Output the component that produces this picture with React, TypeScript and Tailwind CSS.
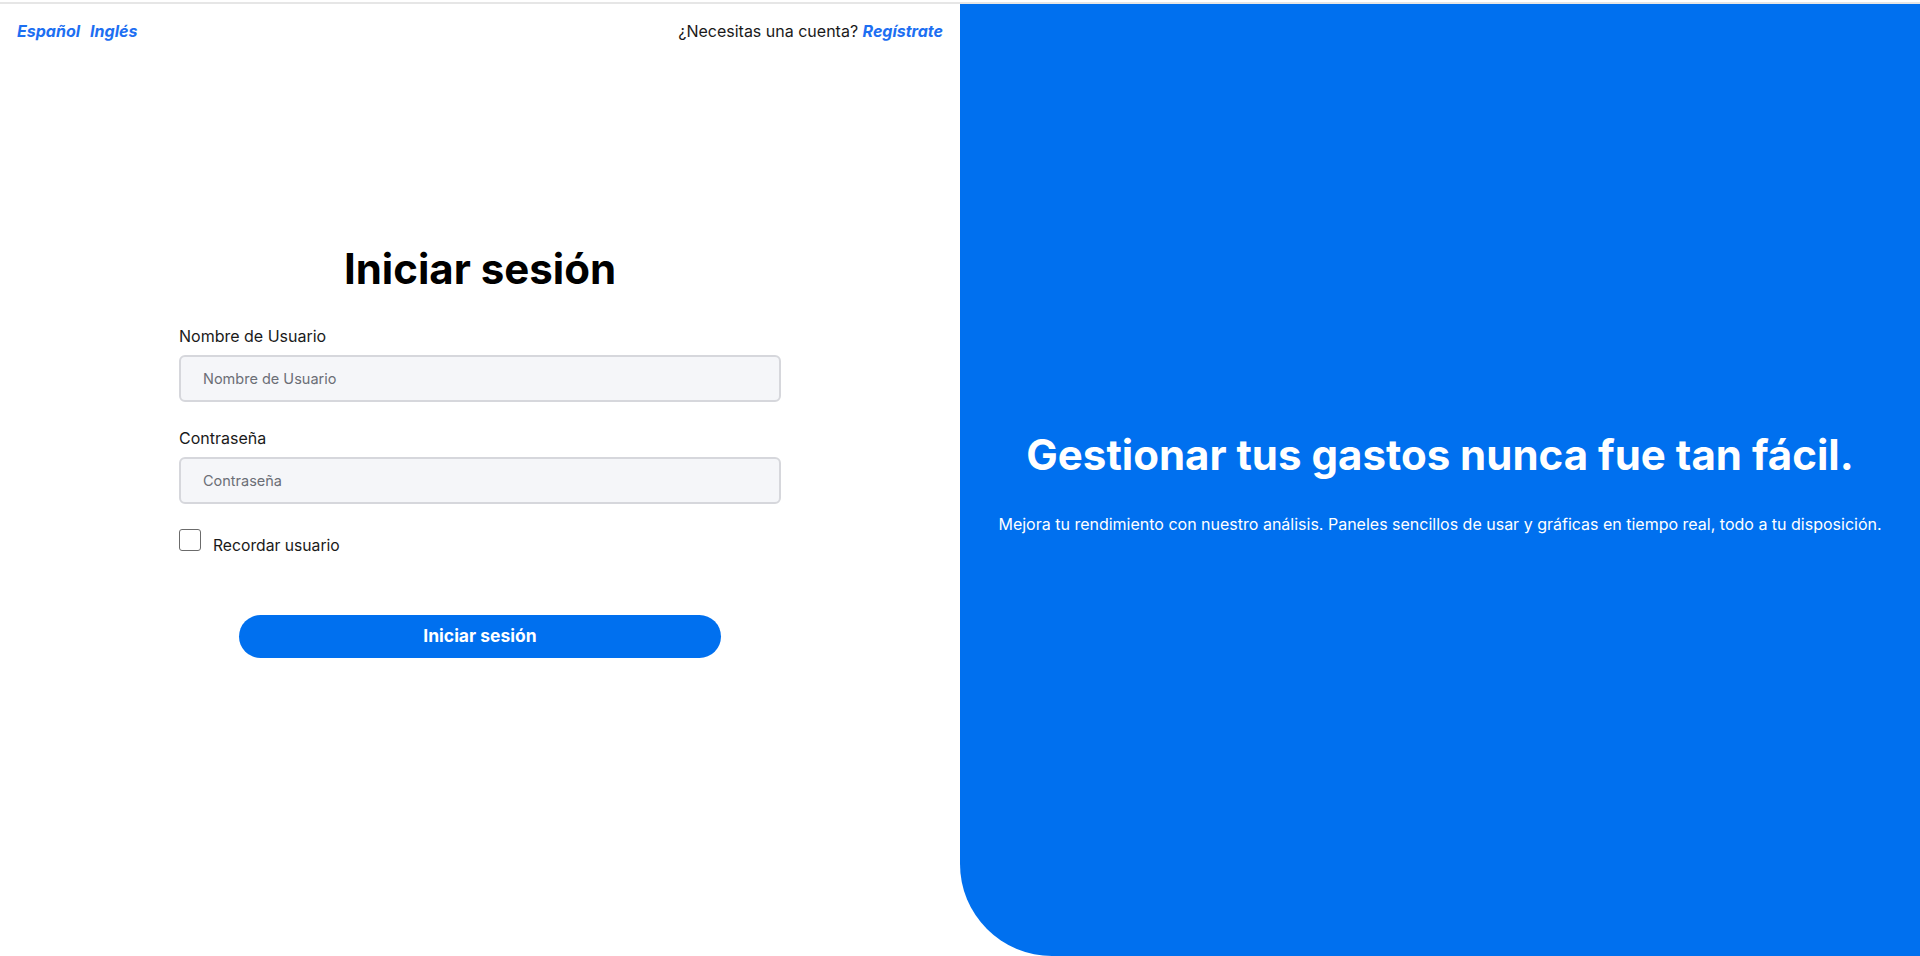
import React from "react";

export default function App() {
  return (
    <div className="w-full h-[956px] bg-white flex flex-col overflow-hidden" style={{ fontFamily: "Inter, 'Noto Sans', sans-serif" }}>
      <div className="h-[4px] bg-white border-b-2 border-[#e6e6e6]" />
      <div className="flex flex-1">
        <div className="w-[960px] flex flex-col">
          <div className="flex justify-between items-center px-[17px] pt-[15px] text-base leading-6">
            <div className="flex gap-[10px] font-bold italic text-[#1d6ff2]">
              <a href="#">Español</a>
              <a href="#">Inglés</a>
            </div>
            <div className="text-[#1a1a1a]">
              ¿Necesitas una cuenta?{" "}
              <a href="#" className="font-bold italic text-[#1d6ff2]">Regístrate</a>
            </div>
          </div>
          <form className="mx-auto w-[602px] mt-[201px] flex flex-col">
            <h1 className="text-center text-[42px] leading-[50px] font-bold text-black">Iniciar sesión</h1>
            <label className="mt-[30px] text-[16px] leading-[24px] text-[#1a1a1a]">Nombre de Usuario</label>
            <input
              type="text"
              placeholder="Nombre de Usuario"
              className="mt-[7px] h-[47px] w-full rounded-[6px] border-2 border-[#d6d7dc] bg-[#f5f6f9] pl-[22px] text-[14.5px] placeholder:text-[#6b6e76] outline-none"
            />
            <label className="mt-[24px] text-[16px] leading-[24px] text-[#1a1a1a]">Contraseña</label>
            <input
              type="password"
              placeholder="Contraseña"
              className="mt-[7px] h-[47px] w-full rounded-[6px] border-2 border-[#d6d7dc] bg-[#f5f6f9] pl-[22px] text-[14.5px] placeholder:text-[#6b6e76] outline-none"
            />
            <div className="mt-[25px] flex items-start gap-[12px]">
              <input type="checkbox" className="appearance-none w-[22px] h-[22px] border-[1.5px] border-[#6b6b6b] rounded-[3px] bg-white" />
              <span className="mt-[5px] text-[15.7px] leading-[24px] text-[#1a1a1a]">Recordar usuario</span>
            </div>
            <button type="button" className="mx-auto mt-[57px] w-[482px] h-[43px] rounded-full bg-[#0070ef] text-white font-bold text-[17.5px]">
              Iniciar sesión
            </button>
          </form>
        </div>
        <div className="flex-1 bg-[#0070ef] rounded-bl-[92px] flex flex-col items-center justify-center pt-[5px] text-white">
          <h2 className="text-[42px] leading-[50px] font-bold">Gestionar tus gastos nunca fue tan fácil.</h2>
          <p className="mt-[32px] text-[16px] leading-[24px]">
            Mejora tu rendimiento con nuestro análisis. Paneles sencillos de usar y gráficas en tiempo real, todo a tu disposición.
          </p>
        </div>
      </div>
    </div>
  );
}
